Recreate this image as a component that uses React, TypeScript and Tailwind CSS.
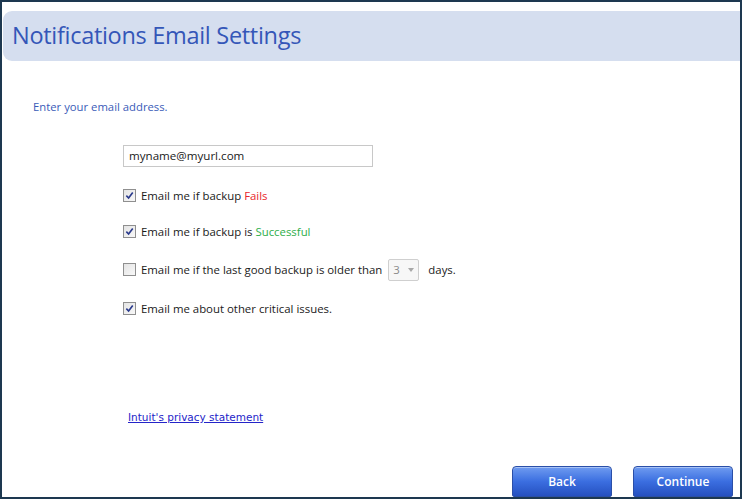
import React from 'react';

function Check({ checked }: { checked: boolean }) {
  return (
    <span className="flex h-[13px] w-[13px] items-center justify-center border border-[#8f8f8f] bg-gradient-to-br from-[#e4e4e4] to-[#f8f8f8]">
      {checked && (
        <svg viewBox="0 0 10 10" className="h-[9px] w-[9px]">
          <path d="M1.5 5.2 L4 7.8 L8.6 1.6" fill="none" stroke="#2a3a8c" strokeWidth="1.8" />
        </svg>
      )}
    </span>
  );
}

function Row({ checked, className = '', children }: { checked: boolean; className?: string; children: React.ReactNode }) {
  return (
    <div className={`flex h-[22px] items-center gap-[5px] text-[11.4px] text-[#1a1a1a] ${className}`}>
      <Check checked={checked} />
      {children}
    </div>
  );
}

export default function App() {
  return (
    <div
      className="flex h-[499px] w-[742px] flex-col border-2 border-[#1d3850] bg-white"
      style={{ fontFamily: '"Open Sans", "Noto Sans", sans-serif' }}
    >
      {/* Шапка */}
      <div className="mt-[9px] ml-[1px] flex h-[50px] items-center rounded-l-[9px] bg-[#d5deef] pl-[9px]">
        <h1 className="text-[23.5px] tracking-[-0.3px] text-[#3456b8]">Notifications Email Settings</h1>
      </div>

      <p className="mt-[38px] pl-[31px] text-[11.3px] text-[#3a5cb8]">Enter your email address.</p>

      <div className="mt-[29px] flex flex-col pl-[121px]">
        <div className="flex h-[22px] w-[250px] items-center border border-[#c8c8c8] pl-[5px] text-[11.6px] text-[#1a1a1a]">
          myname@myurl.com
        </div>

        <Row checked className="mt-[18px]">
          <span>
            Email me if backup <span className="text-[#e8262b]">Fails</span>
          </span>
        </Row>
        <Row checked className="mt-[14px]">
          <span>
            Email me if backup is <span className="text-[#2eae4a]">Successful</span>
          </span>
        </Row>
        <Row checked={false} className="mt-[16px]">
          <span>Email me if the last good backup is older than</span>
          <span className="ml-[1px] flex h-[22px] w-[31px] items-center justify-between rounded-[2px] border border-[#cfcfcf] bg-[#f7f7f7] px-[4px] text-[#8a8a8a]">
            3
            <svg viewBox="0 0 6 4" className="h-[4px] w-[6px]">
              <path d="M0 0 H6 L3 4 Z" fill="#a8a8a8" />
            </svg>
          </span>
          <span className="ml-[4px]">days.</span>
        </Row>
        <Row checked className="mt-[17px]">
          <span>Email me about other critical issues.</span>
        </Row>
      </div>

      <a
        href="#"
        className="mt-[90px] ml-[126px] w-fit text-[10.5px] text-[#2424c8] underline"
        style={{ fontFamily: '"DejaVu Sans", sans-serif' }}
      >
        Intuit's privacy statement
      </a>

      <div className="mt-auto flex justify-end gap-[21px] pr-[7px]">
        {['Back', 'Continue'].map((b) => (
          <button
            key={b}
            className="h-[31px] w-[100px] rounded-t-[4px] rounded-b-[2px] border border-[#2a4fa8] bg-gradient-to-b from-[#6f9bf0] via-[#3b6ee0] to-[#2550c0] text-[12px] font-semibold text-white shadow-[inset_0_1px_0_rgba(255,255,255,0.4)]"
          >
            {b}
          </button>
        ))}
      </div>
    </div>
  );
}
